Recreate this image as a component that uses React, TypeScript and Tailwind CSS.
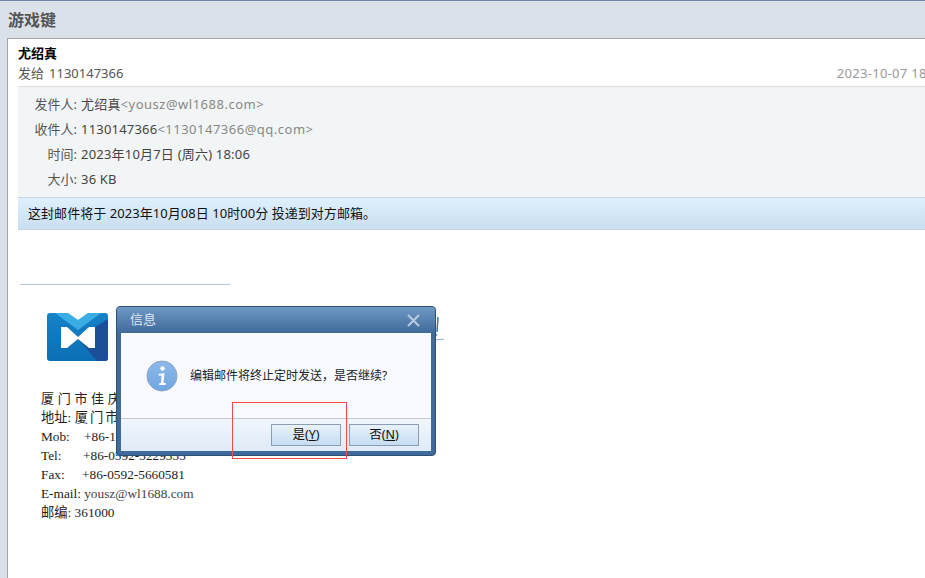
const sans = "font-['Noto_Sans','Noto_Sans_CJK_SC',sans-serif]";

function MetaRow({ label, children }: { label: string; children: React.ReactNode }) {
  return (
    <div className="flex h-[25px] items-center">
      <span className="w-[59px] shrink-0 text-right text-[#555]">{label}</span>
      <span className="ml-[4px] tracking-[0.2px] text-[#444]">{children}</span>
    </div>
  );
}

function Logo() {
  return (
    <svg width="62" height="49" viewBox="0 0 62 49" className="block">
      <defs>
        <linearGradient id="lg" x1="0" y1="0" x2="0" y2="1">
          <stop offset="0" stopColor="#1682c8" />
          <stop offset="1" stopColor="#0a6fb4" />
        </linearGradient>
      </defs>
      <rect width="61" height="48" rx="3" fill="url(#lg)" />
      <path d="M31 26 L48 14 L61 6 L61 45 Q61 48 58 48 L50 48 Z" fill="#1c4f97" />
      <path d="M8 0 L21 0 L31 7 L41 0 L54 0 L31 17 Z" fill="#3aaee4" />
      <path d="M21 0 L41 0 L31 7 Z" fill="#fff" />
      <path d="M14 14 L20 14 L31 24 L42 14 L48 14 L48 35 L42 35 L31 26 L20 35 L14 35 Z" fill="#fff" />
    </svg>
  );
}

function InfoIcon() {
  return (
    <svg width="32" height="32" viewBox="0 0 32 32" className="shrink-0">
      <defs>
        <linearGradient id="ig" x1="0" y1="0" x2="0" y2="1">
          <stop offset="0" stopColor="#8db9e8" />
          <stop offset="1" stopColor="#70a6e2" />
        </linearGradient>
      </defs>
      <circle cx="16" cy="16" r="15" fill="url(#ig)" stroke="#8ba5c4" />
      <circle cx="16.5" cy="8.5" r="2.2" fill="#fff" />
      <path d="M12.5 14 L18.5 13 L17.5 23 L20 23 L19.5 25 L13 25 L13.5 23 L15 23 L15.5 15.5 L12.5 15.5 Z" fill="#fff" />
    </svg>
  );
}

function DialogButton({ children }: { children: React.ReactNode }) {
  return (
    <button className="flex h-[22px] w-[70px] items-center justify-center border border-[#8a9db2] bg-gradient-to-b from-[#e9f2fb] to-[#c6dcf1] text-[12.5px] text-[#111]">
      {children}
    </button>
  );
}

export default function App() {
  return (
    <div className={`relative h-[578px] w-[925px] overflow-hidden border-t border-[#6f87a8] bg-[#dbe1e9] ${sans}`}>
      <div className="flex h-[37px] items-center pl-[8px] pt-[1px] text-[16px] font-bold text-[#555]">游戏键</div>

      <div className="ml-[7px] h-[540px] w-[960px] border-l border-t border-[#a3a7ad] bg-white pl-[10px]">
        <div className="h-[47px] pt-[4px] text-[13px] leading-[20px]">
          <div className="font-bold text-black">尤绍真</div>
          <div className="flex justify-between pr-[21px] text-[#555]">
            <span>
              发给<span className="ml-[5px]">1130147366</span>
            </span>
            <span className="tracking-[0.3px] text-[#999]">2023-10-07 18:06</span>
          </div>
        </div>

        <div className="border-t border-[#dedede] bg-[#f1f5f5] pb-[5px] pt-[5px] text-[13px]">
          <MetaRow label="发件人:">
            尤绍真<span className="tracking-[0.5px] text-[#888]">&lt;yousz@wl1688.com&gt;</span>
          </MetaRow>
          <MetaRow label="收件人:">
            1130147366<span className="tracking-[0.5px] text-[#888]">&lt;1130147366@qq.com&gt;</span>
          </MetaRow>
          <MetaRow label="时间:">2023年10月7日 (周六) 18:06</MetaRow>
          <MetaRow label="大小:">36 KB</MetaRow>
        </div>

        <div className="flex h-[33px] items-center border-y border-[#c5d3e2] bg-gradient-to-b from-[#dff0fc] to-[#c9def0] pl-[10px] text-[13px] tracking-[0.05px] text-[#111]">
          这封邮件将于 2023年10月08日 10时00分 投递到对方邮箱。
        </div>

        <div className="ml-[2px] mt-[54px] h-px w-[210px] bg-[#b7c5de]" />

        <div className="ml-[29px] mt-[28px]">
          <Logo />
        </div>

        <div className="ml-[23px] mt-[27px] font-['Liberation_Serif','Noto_Sans_CJK_SC',serif] text-[13.3px] leading-[19px] text-[#222]">
          <div className="text-[13px] tracking-[3.7px]">厦门市佳庆</div>
          <div>
            地址: <span className="tracking-[2px]">厦门市</span>
          </div>
          <div className="flex">
            <span className="w-[43px]">Mob:</span>
            <span>+86-1</span>
          </div>
          <div className="flex">
            <span className="w-[42px]">Tel:</span>
            <span>+86-0592-3229333</span>
          </div>
          <div className="flex">
            <span className="w-[41px]">Fax:</span>
            <span>+86-0592-5660581</span>
          </div>
          <div>
            E-mail: <span className="text-[#444]">yousz@wl1688.com</span>
          </div>
          <div>邮编: 361000</div>
        </div>
      </div>

      {/* bit of the logo wordmark that sticks out past the dialog */}
      <svg width="14" height="34" viewBox="0 0 14 34" className="absolute left-[432px] top-[309px]">
        <path d="M6 7 L5 22" stroke="#2b78b0" strokeWidth="1.5" fill="none" />
        <circle cx="4.5" cy="25" r="0.8" fill="#2b78b0" />
        <path d="M3 30 L12 29" stroke="#8fb4d0" strokeWidth="1" fill="none" />
      </svg>

      <div className="absolute left-[116px] top-[305px] flex h-[150px] w-[320px] flex-col rounded-[4px] border border-[#2f4f74] bg-[#3f6a9a] px-[4px] pb-[4px]">
        <div className="-mx-[4px] flex h-[26px] shrink-0 items-center justify-between rounded-t-[3px] bg-gradient-to-b from-[#6f98c4] to-[#3f6a9a] pl-[13px] pr-[15px] text-[13px] text-[#dde6f1]">
          <span>信息</span>
          <svg width="13" height="13" viewBox="0 0 13 13">
            <path d="M1 1 L12 12 M12 1 L1 12" stroke="#b9cbdf" strokeWidth="2" fill="none" />
          </svg>
        </div>
        <div className="flex flex-1 flex-col bg-[#f8faff]">
          <div className="flex h-[85px] items-center gap-[12px] pl-[25px] text-[12px] text-[#222]">
            <InfoIcon />
            <span>编辑邮件将终止定时发送，是否继续?</span>
          </div>
          <div className="flex flex-1 items-center justify-end gap-[8px] border-t border-[#c0c9d4] bg-gradient-to-b from-[#f0f6fc] to-[#dfebf7] pr-[12px]">
            <DialogButton>
              是(<span className="underline">Y</span>)
            </DialogButton>
            <DialogButton>
              否(<span className="underline">N</span>)
            </DialogButton>
          </div>
        </div>
      </div>

      {/* red annotation box drawn on the screenshot */}
      <div className="absolute left-[232px] top-[401px] h-[57px] w-[115px] border border-[#f04a4a]" />
    </div>
  );
}
